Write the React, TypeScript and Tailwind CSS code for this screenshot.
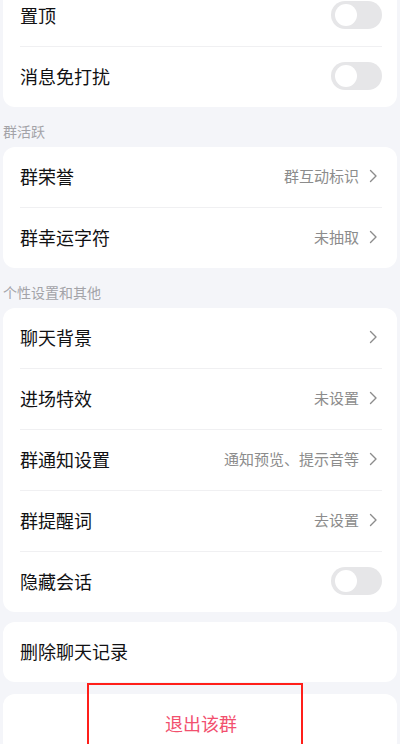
import React from "react";

const font = { fontFamily: '"Noto Sans CJK SC", "Noto Sans", sans-serif' };

function Toggle() {
  return (
    <div className="w-[51px] h-[28px] rounded-full bg-[#e6e6e8] flex items-center pl-[4px]">
      <div className="w-[22px] h-[22px] rounded-full bg-white" />
    </div>
  );
}

function Chevron() {
  return (
    <svg width="9" height="14" viewBox="0 0 9 14" fill="none" className="ml-[10px]">
      <path d="M1.5 1.5L7 7L1.5 12.5" stroke="#8c8c8c" strokeWidth="1.4" strokeLinecap="round" strokeLinejoin="round" />
    </svg>
  );
}

type RowProps = { label: string; value?: string; toggle?: boolean; chevron?: boolean; first?: boolean };

function Row({ label, value, toggle, chevron, first }: RowProps) {
  return (
    <div className={first ? "" : "border-t border-[#f0f0f2]"}>
      <div className="h-[60px] flex items-center justify-between pb-[3px]">
        <span className="text-[18px] text-[#111113] leading-none">{label}</span>
        {toggle && <Toggle />}
        {chevron && (
          <div className="flex items-center pr-[4px]">
            {value && <span className="text-[15px] text-[#8c8c8c] leading-none">{value}</span>}
            <Chevron />
          </div>
        )}
      </div>
    </div>
  );
}

function Card({ children, className = "" }: { children: React.ReactNode; className?: string }) {
  return <div className={`mx-[3px] rounded-[12px] bg-white pl-[17px] pr-[15px] ${className}`}>{children}</div>;
}

function Label({ text }: { text: string }) {
  return (
    <div className="h-[40px] pt-[14px] pl-[3px]">
      <span className="text-[14px] leading-[20px] text-[#a3a3a8] block">{text}</span>
    </div>
  );
}

export default function App() {
  return (
    <div className="w-[400px] h-[744px] overflow-hidden bg-[#f4f5f9] relative" style={font}>
      <div className="-mt-[14px]">
        <Card>
          <Row label="置顶" toggle first />
          <Row label="消息免打扰" toggle />
        </Card>
        <Label text="群活跃" />
        <Card>
          <Row label="群荣誉" value="群互动标识" chevron first />
          <Row label="群幸运字符" value="未抽取" chevron />
        </Card>
        <Label text="个性设置和其他" />
        <Card>
          <Row label="聊天背景" chevron first />
          <Row label="进场特效" value="未设置" chevron />
          <Row label="群通知设置" value="通知预览、提示音等" chevron />
          <Row label="群提醒词" value="去设置" chevron />
          <Row label="隐藏会话" toggle />
        </Card>
        <Card className="mt-[10px]">
          <Row label="删除聊天记录" first />
        </Card>
        <Card className="mt-[12px]">
          <div className="h-[60px] flex items-center justify-center pb-[3px]">
            <span className="text-[18px] text-[#f2506e] leading-none">退出该群</span>
          </div>
        </Card>
      </div>
      <div className="absolute left-[87px] top-[683px] w-[216px] h-[80px] border-2 border-[#ff1f1a]" />
    </div>
  );
}
